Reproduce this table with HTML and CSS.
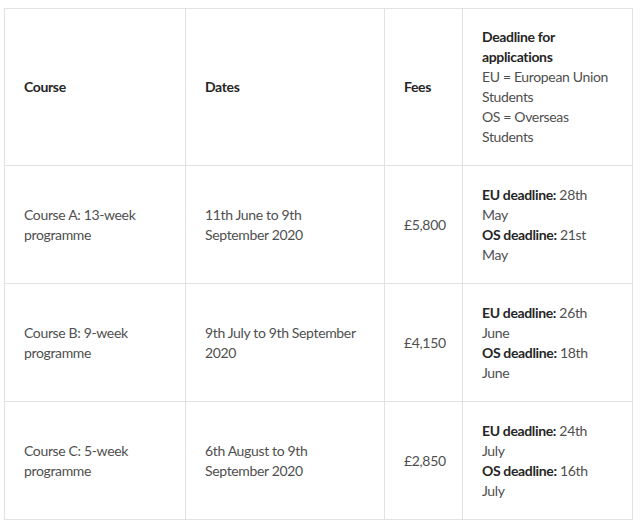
FILE: index.html
```html
<!DOCTYPE html>
<html lang="en">
<head>
<meta charset="utf-8">
<title>Courses</title>
<link rel="stylesheet" href="styles.css">
</head>
<body>
<table class="courses">
  <colgroup>
    <col class="c-course">
    <col class="c-dates">
    <col class="c-fees">
    <col class="c-deadline">
  </colgroup>
  <thead>
    <tr>
      <th>Course</th>
      <th>Dates</th>
      <th>Fees</th>
      <th><strong>Deadline for applications</strong><br><span class="note">EU = European Union Students</span><br><span class="note">OS = Overseas Students</span></th>
    </tr>
  </thead>
  <tbody>
    <tr>
      <td>Course A: 13-week programme</td>
      <td>11th June to 9th September 2020</td>
      <td>£5,800</td>
      <td><strong>EU deadline:</strong> 28th May<br><strong>OS deadline:</strong> 21st May</td>
    </tr>
    <tr>
      <td>Course B: 9-week programme</td>
      <td>9th July to 9th September 2020</td>
      <td>£4,150</td>
      <td><strong>EU deadline:</strong> 26th June<br><strong>OS deadline:</strong> 18th June</td>
    </tr>
    <tr>
      <td>Course C: 5-week programme</td>
      <td>6th August to 9th September 2020</td>
      <td>£2,850</td>
      <td><strong>EU deadline:</strong> 24th July<br><strong>OS deadline:</strong> 16th July</td>
    </tr>
  </tbody>
</table>
</body>
</html>
```

FILE: styles.css
```css
html, body {
  margin: 0;
  background: #ffffff;
}
body {
  padding: 8px 0 0 4px;
  font-family: Lato, "Liberation Sans", sans-serif;
  font-size: 14px;
  letter-spacing: -0.35px;
  line-height: 20px;
  color: #4f4f4f;
}
.courses {
  border-collapse: collapse;
  table-layout: fixed;
  width: 628px;
}
.c-course { width: 181px; }
.c-dates { width: 199px; }
.c-fees { width: 78px; }
.c-deadline { width: 170px; }
.courses th,
.courses td {
  border: 1px solid #e2e2e2;
  padding: 18px 16px 18px 19px;
  text-align: left;
  vertical-align: middle;
  font-weight: 400;
}
.courses th:last-child,
.courses td:last-child {
  padding-right: 22px;
}
.courses th {
  color: #262626;
  font-weight: 700;
}
.courses strong {
  color: #262626;
  font-weight: 700;
}
.courses .note {
  color: #4f4f4f;
  font-weight: 400;
}
.courses tbody tr {
  height: 118px;
}
```
